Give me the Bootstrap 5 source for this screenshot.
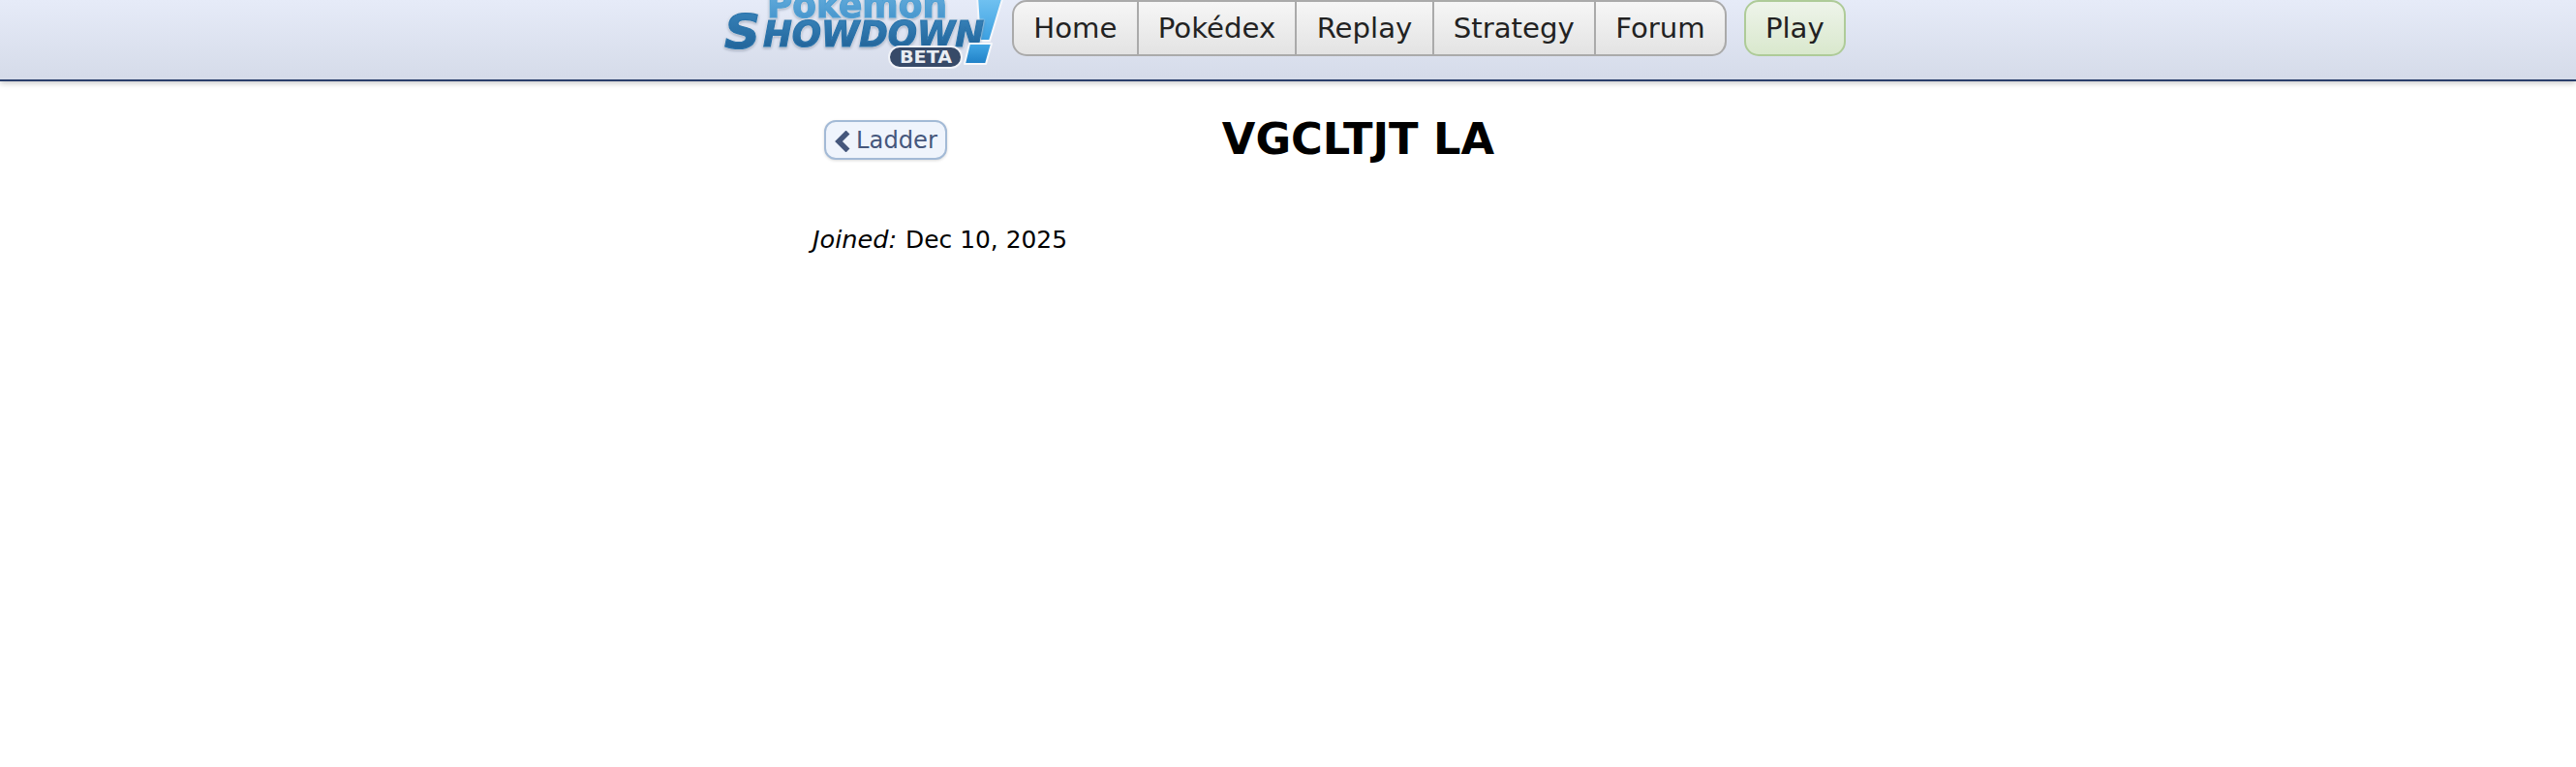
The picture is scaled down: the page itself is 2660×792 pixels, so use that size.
<!DOCTYPE html>
<html lang="en">
<head>
<meta charset="utf-8">
<title>VGCLTJT LA</title>
<link href="https://cdn.jsdelivr.net/npm/bootstrap@5.3.0/dist/css/bootstrap.min.css" rel="stylesheet">
<style>
html,body{height:100%;background:#fff;}
body{font-family:"DejaVu Sans",Verdana,sans-serif;color:#000;overflow:hidden;}
.ps-header{height:84px;background:linear-gradient(#e6ebf8,#d5dbe9);border-bottom:2px solid #2a3e6b;box-shadow:0 2px 6px rgba(0,0,0,.22);padding-left:746px;}
.ps-logo{width:290px;height:72px;flex:none;display:block;}
.ps-logo text{font-family:"DejaVu Sans",sans-serif;font-weight:700;}
.ps-logo .ps-word{filter:drop-shadow(0 0 1px #fff) drop-shadow(0 1px 1px rgba(40,60,90,.45));}
.ps-tabs{margin-left:9px;height:58px;}
.ps-tab.btn{height:58px;border:2px solid #aaa;border-left-width:0;border-radius:0;background:linear-gradient(#f6f6f6,#e3e3e3);color:#222;font-size:29.2px;line-height:54px;padding:0 20.2px;}
.ps-tab.btn:first-child{border-left-width:2px;border-radius:15px 0 0 15px;}
.ps-tab.btn:last-child{border-radius:0 15px 15px 0;}
.ps-play.btn{margin-left:18px;height:58px;border:2px solid #aecb98;border-radius:15px;background:linear-gradient(#eef4ea,#d9e8cd);color:#222;font-size:29.2px;line-height:54px;padding:0 20px;}
.ps-main{padding-left:839px;width:1966px;position:relative;}
.ps-title{font-size:44.7px;font-weight:700;line-height:1;margin:0;text-align:center;padding-top:38px;height:148px;color:#000;}
.ps-back.btn{position:absolute;left:851px;top:40px;height:41px;width:127px;padding:2px 0 0 1px;border:2px solid #a3bad6;border-radius:12px;background:#eff4fc;color:#45577c;font-size:24.2px;line-height:35px;box-shadow:0 1px 3px rgba(0,0,0,.15);display:flex;align-items:center;justify-content:center;gap:6px;}
.ps-joined{font-size:24.9px;line-height:30px;margin:0;color:#000;}
.ps-joined em{font-size:25.6px;margin-right:1px;}
</style>
</head>
<body>
<header class="ps-header d-flex align-items-start">
<svg class="ps-logo" viewBox="0 0 290 72" aria-label="Pokemon Showdown Beta">
<defs>
<linearGradient id="g1" x1="0" y1="0" x2="0" y2="1"><stop offset="0" stop-color="#6fb5e2"/><stop offset="1" stop-color="#3f8fc8"/></linearGradient>
<linearGradient id="g2" x1="0" y1="0" x2="0" y2="1"><stop offset="0" stop-color="#3a86bd"/><stop offset="1" stop-color="#1d5d92"/></linearGradient>
<linearGradient id="g3" x1="0" y1="0" x2="0" y2="1"><stop offset="0" stop-color="#74c4f2"/><stop offset="1" stop-color="#3b9fe0"/></linearGradient>
<linearGradient id="g4" x1="0" y1="0" x2="0" y2="1"><stop offset="0" stop-color="#44a8e6"/><stop offset="1" stop-color="#1f80c6"/></linearGradient>
</defs>
<polygon points="263,-4 290,-4 276,42 266,42" fill="url(#g3)" stroke="#f5f7fb" stroke-width="2"/>
<g class="ps-word">
<text x="46" y="18" font-size="38" textLength="186" lengthAdjust="spacingAndGlyphs" fill="url(#g1)" stroke="#4f9fd3" stroke-width="1.2">Pokemon</text>
<text x="2" y="50" font-size="50" font-style="italic" textLength="37" lengthAdjust="spacingAndGlyphs" fill="url(#g2)" stroke="#2a73ab" stroke-width="1.2">S</text>
<text x="42" y="48" font-size="37" font-style="italic" textLength="228" lengthAdjust="spacingAndGlyphs" fill="url(#g2)" stroke="#2a73ab" stroke-width="1.2">HOWDOWN</text>
</g>
<polygon points="255,45 278,45 272,66 250,66" fill="url(#g4)" stroke="#f5f7fb" stroke-width="2" stroke-linejoin="round"/>
<rect x="172" y="48" width="75" height="22" rx="11" fill="#374a68" stroke="#f1f3f8" stroke-width="2"/>
<text x="210" y="65" font-size="18" text-anchor="middle" textLength="54" lengthAdjust="spacingAndGlyphs" fill="#e9edf3">BETA</text>
</svg>
<nav class="ps-tabs d-flex">
<a class="ps-tab btn" href="#">Home</a>
<a class="ps-tab btn" href="#">Pokédex</a>
<a class="ps-tab btn" href="#">Replay</a>
<a class="ps-tab btn" href="#">Strategy</a>
<a class="ps-tab btn" href="#">Forum</a>
</nav>
<a class="ps-play btn" href="#">Play</a>
</header>
<main class="ps-main">
<a class="ps-back btn" href="#"><svg width="16" height="22" viewBox="0 0 16 22"><path d="M13.5 1.5 L4 11 L13.5 20.5" fill="none" stroke="#45577c" stroke-width="5.5"/></svg>Ladder</a>
<h1 class="ps-title">VGCLTJT LA</h1>
<p class="ps-joined"><em>Joined:</em> Dec 10, 2025</p>
</main>
<script src="https://cdn.jsdelivr.net/npm/bootstrap@5.3.0/dist/js/bootstrap.bundle.min.js"></script>
</body>
</html>
